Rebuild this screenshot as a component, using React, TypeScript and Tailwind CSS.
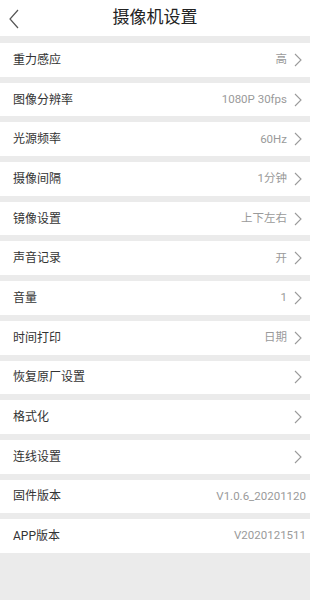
import React from "react";

interface SettingRow {
  label: string;
  value?: string;
  arrow: boolean;
}

const rows: SettingRow[] = [
  { label: "重力感应", value: "高", arrow: true },
  { label: "图像分辨率", value: "1080P 30fps", arrow: true },
  { label: "光源频率", value: "60Hz", arrow: true },
  { label: "摄像间隔", value: "1分钟", arrow: true },
  { label: "镜像设置", value: "上下左右", arrow: true },
  { label: "声音记录", value: "开", arrow: true },
  { label: "音量", value: "1", arrow: true },
  { label: "时间打印", value: "日期", arrow: true },
  { label: "恢复原厂设置", arrow: true },
  { label: "格式化", arrow: true },
  { label: "连线设置", arrow: true },
  { label: "固件版本", value: "V1.0.6_20201120", arrow: false },
  { label: "APP版本", value: "V2020121511", arrow: false },
];

function Chevron() {
  return (
    <svg width="8" height="14" viewBox="0 0 8 14" className="shrink-0">
      <path d="M1 1 L7 7 L1 13" fill="none" stroke="#9a9a9a" strokeWidth="1.1" />
    </svg>
  );
}

export default function App() {
  return (
    <div
      className="w-[310px] h-[600px] bg-[#ebebeb] overflow-hidden"
      style={{ fontFamily: 'Roboto, "Noto Sans CJK SC", sans-serif' }}
    >
      {/* Header */}
      <div className="h-[36px] bg-white flex items-center relative">
        <svg width="12" height="20" viewBox="0 0 12 20" className="ml-[8px] mt-[1px]">
          <path d="M10 1 L2 10 L10 19" fill="none" stroke="#555" strokeWidth="1.2" />
        </svg>
        <div className="absolute inset-0 flex items-center justify-center text-[17px] text-[#222] pointer-events-none">
          摄像机设置
        </div>
      </div>

      {/* Setting rows */}
      <div className="flex flex-col gap-[6px] pt-[7px]">
        {rows.map((row) => (
          <div
            key={row.label}
            className={`h-[33.7px] bg-white flex items-center justify-between pl-[13px] ${
              row.arrow ? "pr-[8px]" : "pr-[4px]"
            }`}
          >
            <span className="text-[12px] text-[#333]">{row.label}</span>
            <div className="flex items-center gap-[7px]">
              {row.value && (
                <span className="text-[11.5px] text-[#9a9a9a]">{row.value}</span>
              )}
              {row.arrow && <Chevron />}
            </div>
          </div>
        ))}
      </div>
    </div>
  );
}
